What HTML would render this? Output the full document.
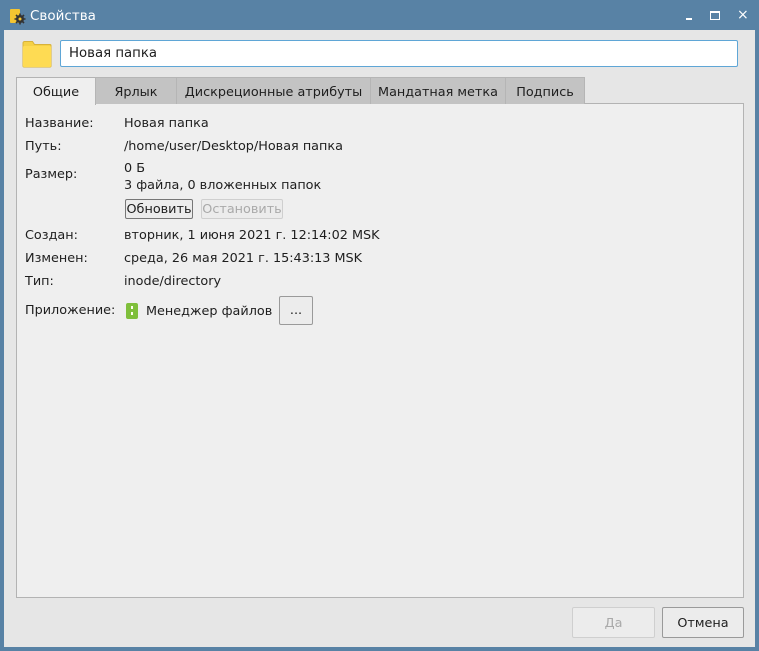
<!DOCTYPE html>
<html><head><meta charset="utf-8"><style>
*{margin:0;padding:0;box-sizing:border-box}
body{width:759px;height:651px;background:#5882a5;font-family:"DejaVu Sans","Liberation Sans",sans-serif;font-size:12.8px;color:#1e1e1e;position:relative;overflow:hidden}
.a{position:absolute;white-space:nowrap}
.title{left:30px;top:8px;color:#fff;font-size:13.5px}
.client{left:4px;top:30px;width:751px;height:617px;background:#e6e6e6}
.edit{left:60px;top:40px;width:678px;height:27px;background:#fff;border:1px solid #5fa6d6;border-radius:2px;padding:5px 0 0 8px;font-size:13.3px}
.tab{top:77px;height:27px;background:#c3c3c3;border:1px solid #b5b5b5;border-bottom:none;text-align:center;padding-top:7px}
.panel{left:16px;top:103px;width:728px;height:495px;background:#efefef;border:1px solid #b3b3b3}
.btn{border:1px solid #9a9a9a;border-radius:2px;background:#ececec;text-align:center}
</style></head><body>
<svg class="a" style="left:9px;top:8px" width="17" height="17"><rect x="1" y="1" width="10" height="14" fill="#f4c531" rx="1"/><circle cx="11" cy="11" r="4" fill="#333"/><circle cx="11" cy="11" r="1.5" fill="#f4c531"/><path d="M11 5.5v2M11 14.5v2M5.5 11h2M14.5 11h2M7 7l1.5 1.5M13.5 13.5L15 15M7 15l1.5-1.5M13.5 8.5L15 7" stroke="#333" stroke-width="1.6"/></svg>
<div class="a title">Свойства</div>
<div class="a" style="left:686px;top:18px;width:6px;height:2px;background:#fff"></div>
<div class="a" style="left:710px;top:11px;width:10px;height:9px;border:1.5px solid #fff;border-top-width:2px"></div>
<div class="a" style="left:737px;top:7px;color:#fff;font-size:14px">×</div>
<div class="a client"></div>
<svg class="a" style="left:22px;top:40px" width="30" height="28"><path d="M1 3a1.5 1.5 0 0 1 1.5-1.5h8l2 3H28a1 1 0 0 1 1 1V26a1 1 0 0 1-1 1H2a1 1 0 0 1-1-1z" fill="#f5d146" stroke="#d8b23a"/><rect x="1" y="6" width="28" height="21" rx="1" fill="#fedb53"/></svg>
<div class="a edit">Новая папка</div>
<div class="a panel"></div>
<div class="a tab" style="left:16px;width:80px;background:#efefef;border-color:#b3b3b3;height:28px">Общие</div>
<div class="a tab" style="left:95px;width:82px">Ярлык</div>
<div class="a tab" style="left:176px;width:195px">Дискреционные атрибуты</div>
<div class="a tab" style="left:370px;width:136px">Мандатная метка</div>
<div class="a tab" style="left:505px;width:80px">Подпись</div>
<div class="a" style="left:25px;top:116px">Название:</div><div class="a" style="left:124px;top:116px">Новая папка</div>
<div class="a" style="left:25px;top:139px">Путь:</div><div class="a" style="left:124px;top:139px">/home/user/Desktop/Новая папка</div>
<div class="a" style="left:25px;top:167px">Размер:</div><div class="a" style="left:124px;top:161px">0 Б</div>
<div class="a" style="left:124px;top:178px">3 файла, 0 вложенных папок</div>
<div class="a btn" style="left:125px;top:199px;width:68px;height:20px;padding-top:2px;border-color:#777">Обновить</div>
<div class="a btn" style="left:201px;top:199px;width:82px;height:20px;padding-top:2px;color:#a9a9a9;border-color:#cfcfcf">Остановить</div>
<div class="a" style="left:25px;top:228px">Создан:</div><div class="a" style="left:124px;top:228px">вторник, 1 июня 2021 г. 12:14:02 MSK</div>
<div class="a" style="left:25px;top:251px">Изменен:</div><div class="a" style="left:124px;top:251px">среда, 26 мая 2021 г. 15:43:13 MSK</div>
<div class="a" style="left:25px;top:274px">Тип:</div><div class="a" style="left:124px;top:274px">inode/directory</div>
<div class="a" style="left:25px;top:303px">Приложение:</div>
<div class="a" style="left:126px;top:303px;width:12px;height:16px;background:#7fbf3b;border-radius:2px"></div>
<div class="a" style="left:131px;top:306px;width:2px;height:3px;background:#ffe"></div><div class="a" style="left:131px;top:312px;width:2px;height:3px;background:#ffe"></div>
<div class="a" style="left:146px;top:304px">Менеджер файлов</div>
<div class="a btn" style="left:279px;top:296px;width:34px;height:29px;padding-top:6px">...</div>
<div class="a btn" style="left:572px;top:607px;width:83px;height:31px;padding-top:8px;color:#a9a9a9;border-color:#cfcfcf">Да</div>
<div class="a btn" style="left:662px;top:607px;width:82px;height:31px;padding-top:8px">Отмена</div>
</body></html>
